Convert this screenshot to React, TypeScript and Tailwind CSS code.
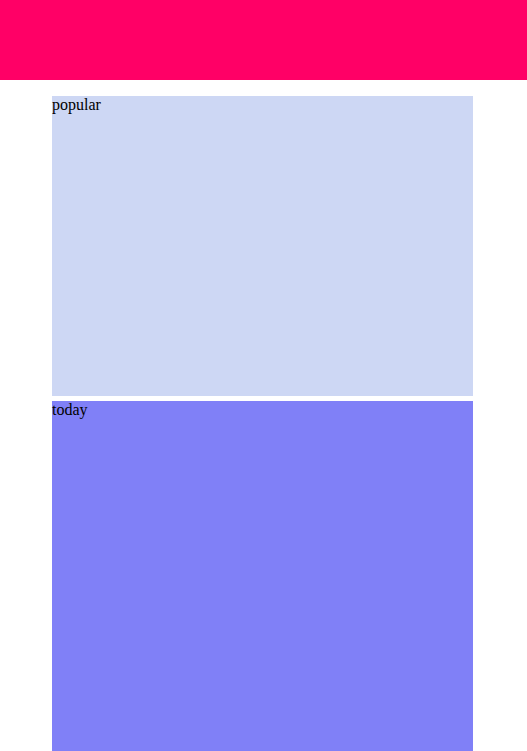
import React from 'react';

const Section = ({ title, className }: { title: string; className: string }) => (
    <div className={className}>
        {title}
    </div>
);

const App = () => (
    <div className="font-['Liberation_Serif',serif] text-base leading-[normal] text-black">
        <header className="h-20 bg-[#ff0066]" />
        <main className="ml-[52px] mt-4 w-[421px] flex flex-col gap-[5px]">
            <Section title="popular" className="h-[300px] bg-[#cdd7f4]" />
            <Section title="today" className="h-[400px] bg-[#8080f7]" />
        </main>
    </div>
);

export default App;
